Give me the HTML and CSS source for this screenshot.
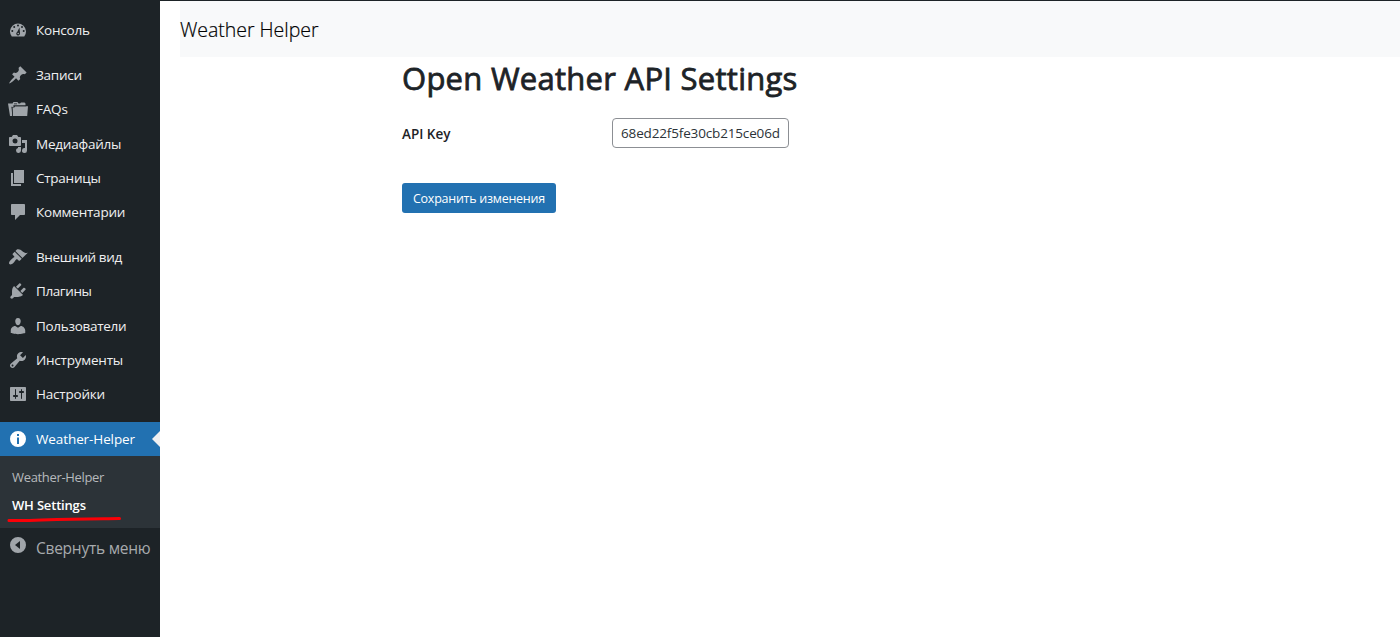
FILE: index.html
```html
<!DOCTYPE html>
<html lang="ru">
<head>
<meta charset="utf-8">
<title>Weather Helper</title>
<link rel="stylesheet" href="styles.css">
</head>
<body>
<div class="admin">
<nav class="sidebar">
<ul class="menu">
<li class="item"><svg class="icon" viewBox="0 0 20 20"><path d="M3.76 16.500h12.480A8 8 0 1 0 3.760 16.500z"/><path class="cut" d="M9 5.500a1 1 0 1 0 2 0a1 1 0 1 0-2 0zM5.200 7a1 1 0 1 0 2 0a1 1 0 1 0-2 0zM13 7a1 1 0 1 0 2 0a1 1 0 1 0-2 0zM3.300 11a1 1 0 1 0 2 0a1 1 0 1 0-2 0zM14.700 11a1 1 0 1 0 2 0a1 1 0 1 0-2 0zM11.500 7.500l.5 5.800a1.900 1.900 0 1 1-2.800-1.400z"/><circle cx="10.200" cy="13.500" r=".8"/></svg><span class="t-console">Консоль</span></li>
<li class="gap"></li>
<li class="item"><svg class="icon" viewBox="0 0 20 20"><path d="M10.44 3.02l1.82-1.82 6.36 6.35-1.83 1.82c-1.05-.68-2.48-.57-3.41.36l-.75.75c-.92.93-1.04 2.35-.35 3.41l-1.83 1.82-2.41-2.41-2.8 2.79c-.42.42-3.38 2.71-3.8 2.29s1.86-3.39 2.28-3.81l2.79-2.79L4.1 9.36l1.83-1.82c1.05.69 2.48.57 3.4-.36l.75-.75c.93-.92 1.05-2.35.36-3.41z"/></svg><span class="t-posts">Записи</span></li>
<li class="item"><svg class="icon" viewBox="0 0 20 20"><path d="M0 4.500h4.500L5.500 3h4l1 1.500h1.500L13 3.500h3.500l1 1V6.500H5.500V8H3.800l.7 9H2z"/><path d="M4.300 8.500h2l.8-1.300H20L19.200 17H5z"/><path class="cut" d="M6 4.500h3v.7H6zM3.500 7.700h.8L5 17h-.7zM5.500 6.500H18v.7H5.500z"/></svg><span class="t-faq">FAQs</span></li>
<li class="item"><svg class="icon" viewBox="0 0 20 20"><path fill-rule="evenodd" d="M13 11V4c0-.55-.45-1-1-1h-1.67L9 1H5L3.67 3H2c-.55 0-1 .45-1 1v7c0 .55.45 1 1 1h10c.55 0 1-.45 1-1zM7 4.500a2.500 2.500 0 1 1 0 5 2.500 2.500 0 0 1 0-5z"/><path d="M14 6h5v10.500a2.500 2.500 0 1 1-2-2.450V9h-3zM10 13h3v3.500a2.500 2.500 0 1 1-3-2.450z"/></svg><span class="t-media">Медиафайлы</span></li>
<li class="item"><svg class="icon" viewBox="0 0 20 20"><path d="M6 15V2h10v13zm-1 1h8v2H3V5h2z"/></svg><span class="t-pages">Страницы</span></li>
<li class="item"><svg class="icon" viewBox="0 0 20 20"><path d="M5 2h11c.55 0 1 .45 1 1v9c0 .55-.45 1-1 1h-4l-5 5v-5H4c-.55 0-1-.45-1-1V3c0-.55.45-1 1-1z"/></svg><span class="t-comments">Комментарии</span></li>
<li class="gap"></li>
<li class="item"><svg class="icon" viewBox="0 0 20 20"><path d="M14.48 11.06L7.41 3.99l1.5-1.5c.5-.56 2.3-.47 3.51.32 1.21.8 1.43 1.28 2.91 2.1 1.18.64 2.45 1.26 4.45.85zm-.71.71L6.7 4.7 4.93 6.47c-.39.39-.39 1.02 0 1.41l1.06 1.06c.39.39.39 1.03 0 1.42-.6.6-1.43 1.11-2.21 1.69-.35.26-.7.53-1.01.84C1.43 14.23.4 16.08 1.4 17.07c.99 1 2.84-.03 4.18-1.36.31-.31.58-.66.85-1.02.57-.78 1.08-1.61 1.69-2.21.39-.39 1.02-.39 1.41 0l1.06 1.06c.39.39 1.02.39 1.41 0z"/></svg><span class="t-look">Внешний вид</span></li>
<li class="item"><svg class="icon" viewBox="0 0 20 20"><path d="M13.11 4.36L9.87 7.6 8 5.73l3.24-3.24c.35-.34 1.05-.2 1.56.32.52.51.66 1.21.31 1.55zm-8 1.77l.91-1.12 9.01 9.01-1.19.84c-.71.71-2.63 1.16-3.82 1.16H6.14L4.9 17.26c-.59.59-1.54.59-2.12 0-.59-.58-.59-1.53 0-2.12l1.24-1.24v-3.88c0-1.13.4-3.19 1.09-3.89zm7.26 3.97l3.24-3.24c.34-.35 1.04-.21 1.55.31.52.51.66 1.21.31 1.55l-3.24 3.25z"/></svg><span class="t-plugins">Плагины</span></li>
<li class="item"><svg class="icon" viewBox="0 0 20 20"><path d="M10 9.25c-2.27 0-2.73-3.44-2.73-3.44C7 4.02 7.82 2 9.97 2c2.16 0 2.98 2.02 2.71 3.81 0 0-.41 3.44-2.68 3.44zm0 2.57L12.72 10c2.39 0 4.52 2.33 4.52 4.53v2.49s-3.65 1.13-7.24 1.13c-3.65 0-7.24-1.13-7.24-1.13v-2.49c0-2.25 1.94-4.48 4.47-4.48z"/></svg><span class="t-users">Пользователи</span></li>
<li class="item"><svg class="icon" viewBox="0 0 20 20"><path d="M16.68 9.77c-1.34 1.34-3.3 1.67-4.95.99l-5.41 6.52c-.99.99-2.59.99-3.58 0s-.99-2.59 0-3.57l6.52-5.42c-.68-1.65-.35-3.61.99-4.95 1.28-1.28 3.12-1.62 4.72-1.06l-2.89 2.89 2.82 2.82 2.86-2.87c.53 1.58.18 3.39-1.08 4.65zM3.81 16.21c.4.39 1.04.39 1.43 0 .4-.4.4-1.04 0-1.43-.39-.4-1.03-.4-1.43 0-.39.39-.39 1.03 0 1.43z"/></svg><span class="t-tools">Инструменты</span></li>
<li class="item"><svg class="icon" viewBox="0 0 20 20"><path fill-rule="evenodd" d="M18 16V4c0-.55-.45-1-1-1H3c-.55 0-1 .45-1 1v12c0 .55.45 1 1 1h14c.55 0 1-.45 1-1zM8 11h1c.55 0 1 .45 1 1s-.45 1-1 1H8v1.500c0 .28-.22.5-.5.5s-.5-.22-.5-.5V13H6c-.55 0-1-.45-1-1s.45-1 1-1h1V5.500c0-.28.22-.5.5-.5s.5.22.5.5V11zm5-2h-1c-.55 0-1-.45-1-1s.45-1 1-1h1V5.500c0-.28.22-.5.5-.5s.5.22.5.5V7h1c.55 0 1 .45 1 1s-.45 1-1 1h-1v5.500c0 .28-.22.5-.5.5s-.5-.22-.5-.5V9z"/></svg><span class="t-settings">Настройки</span></li>
<li class="gap"></li>
<li class="item current"><svg class="icon" viewBox="0 0 20 20"><path fill-rule="evenodd" d="M10 2a8 8 0 1 0 0 16 8 8 0 0 0 0-16zM9 5h2v2H9zM9 8.500h2V15H9z"/></svg><span class="t-weather">Weather-Helper</span></li>
</ul>
<ul class="submenu">
<li class="sub"><span class="t-sub">Weather-Helper</span></li>
<li class="sub active"><span class="t-active">WH Settings</span><svg class="underline" viewBox="0 0 116 8"><path d="M3 5.500C30 6 35 4.500 65 4.300S100 3.500 113.500 3.500"/></svg></li>
</ul>
<div class="collapse"><svg class="icon" viewBox="0 0 20 20"><path fill-rule="evenodd" d="M10 2a8 8 0 1 0 0 16 8 8 0 0 0 0-16zM12 6v8l-5-4z"/></svg><span class="t-collapse">Свернуть меню</span></div>
</nav>
<main class="content">
<header class="navbar"><span class="t-brand">Weather Helper</span></header>
<form class="settings">
<h1 class="title"><span class="t-title">Open Weather API Settings</span></h1>
<div class="field"><label class="label" for="key"><span class="t-label">API Key</span></label><div class="input" id="key"><span class="t-key">68ed22f5fe30cb215ce06d</span></div></div>
<button class="save" type="button"><span class="t-save">Сохранить изменения</span></button>
</form>
</main>
</div>
</body>
</html>
```
FILE: styles.css
```css
* { box-sizing: border-box; }
body { margin: 0; background: #fff; font-family: "Open Sans", "Noto Sans", sans-serif; color: #1d2327; }
ul { list-style: none; margin: 0; padding: 0; }
.admin { display: flex; height: 637px; border-top: 1px solid #1d2327; overflow: hidden; }
.sidebar { width: 160px; flex: none; padding-top: 12px; background: #1d2327; white-space: nowrap; }
.item { position: relative; display: flex; align-items: center; gap: 8px; height: 34.25px; padding-left: 8px; font-size: 13.5px; color: #f0f0f1; }
.gap { height: 10.7px; }
.icon { width: 20px; height: 20px; flex: none; fill: #a0a5aa; }
.icon .cut { fill: #1d2327; }
.current { height: 34px; background: #2271b1; color: #fff; }
.current .icon { fill: #fff; }
.current::after { content: ""; position: absolute; right: 0; top: 9px; border: 8px solid transparent; border-left: 0; border-right-color: #f0f0f1; }
.submenu { height: 72px; padding-top: 7px; background: #2c3338; }
.sub { position: relative; display: flex; align-items: center; height: 28px; padding-left: 12px; font-size: 13px; color: #b6b9bc; }
.active { color: #fff; font-weight: 600; }
.underline { position: absolute; left: 6px; top: 24px; width: 116px; height: 8px; fill: none; stroke: #fb0007; stroke-width: 3; stroke-linecap: round; }
.collapse { display: flex; align-items: center; gap: 8px; height: 40px; padding-left: 8px; font-size: 15.5px; color: #a7aaad; }
.collapse .icon { margin-top: -5px; }
.content { flex: 1; padding-left: 20px; }
.navbar { display: flex; align-items: center; height: 56px; padding-top: 1px; background: #f8f9fa; font-size: 19.5px; font-weight: 300; color: #000; }
.settings { width: 776px; margin-left: 222px; }
.title { margin: 0; font-size: 31px; line-height: 38px; padding-top: 2px; font-weight: 400; white-space: nowrap; -webkit-text-stroke: 0.8px #1d2327; }
.field { display: flex; align-items: center; height: 30px; margin-top: 21px; }
.label { width: 210px; padding-top: 2px; font-size: 13.5px; font-weight: 600; }
.input { display: flex; align-items: center; width: 177px; height: 30px; padding: 0 0 1px 8px; border: 1px solid #8c8f94; border-radius: 4px; font-size: 13.5px; color: #2c3338; }
.save { display: flex; align-items: center; width: 154px; height: 30px; margin-top: 35px; padding: 0 0 0 11px; border: 0; border-radius: 3px; background: #2271b1; color: #fff; font: 12.5px "Open Sans", "Noto Sans", sans-serif; white-space: nowrap; }

/* Tracking per label */
.t-console { letter-spacing: -0.2px; }
.t-posts { letter-spacing: -0.25px; }
.t-faq { letter-spacing: -0.2px; }
.t-media { letter-spacing: -0.22px; }
.t-pages { letter-spacing: -0.25px; }
.t-comments { letter-spacing: -0.22px; }
.t-look { letter-spacing: -0.4px; }
.t-plugins { letter-spacing: -0.4px; }
.t-users { letter-spacing: -0.29px; }
.t-tools { letter-spacing: -0.22px; }
.t-settings { letter-spacing: -0.2px; }
.t-weather { letter-spacing: -0.1px; }
.t-sub { letter-spacing: -0.33px; }
.t-active { letter-spacing: -0.18px; }
.t-collapse { letter-spacing: -0.25px; }
.t-brand { letter-spacing: -0.03px; -webkit-text-stroke: 0.2px #000; }
.t-title { letter-spacing: 0.27px; }
.t-label { letter-spacing: 0; }
.t-key { letter-spacing: -0.15px; }
.t-save { letter-spacing: -0.26px; }
```
